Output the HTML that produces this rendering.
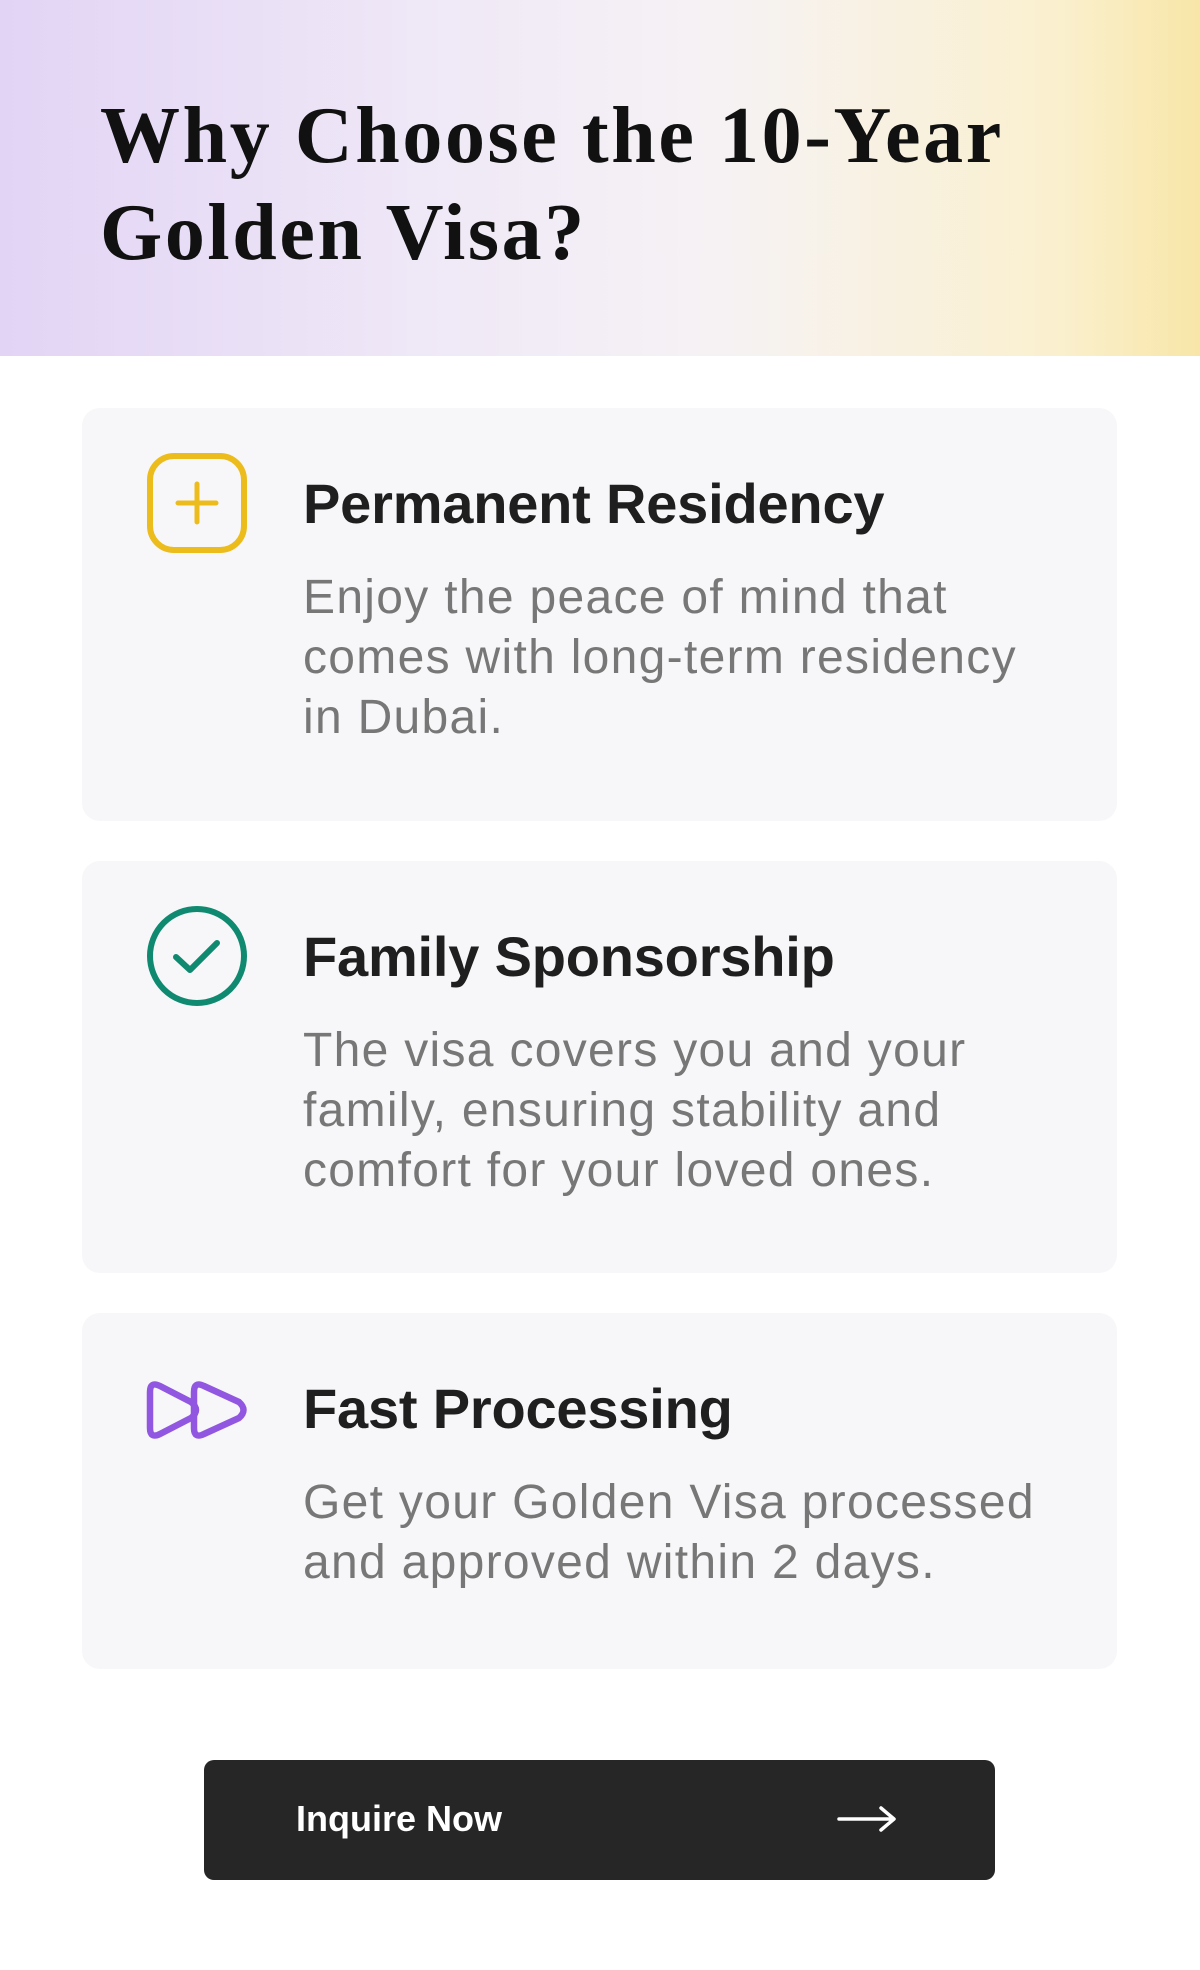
<!DOCTYPE html>
<html><head><meta charset="utf-8"><style>
*{margin:0;padding:0;box-sizing:border-box}
body{width:1200px;height:1970px;background:#fff;font-family:"Liberation Sans",sans-serif;position:relative;overflow:hidden}
.hdr{position:absolute;left:0;top:0;width:1200px;height:356px;background:linear-gradient(90deg,#e2d4f5 0%,#efe8f7 35%,#f6f2f4 60%,#faf0cf 88%,#f8e6a8 100%)}
.hdr h1{position:absolute;left:100px;top:88px;font-family:"Liberation Serif",serif;font-weight:bold;font-size:80px;line-height:97px;color:#111;letter-spacing:2.6px}
.card{position:absolute;left:82px;width:1035px;background:#f7f7f9;border-radius:18px}
.ic{position:absolute;left:64px;top:44px;width:102px;height:102px}
.t{position:absolute;left:221px;top:66px;font-size:56px;line-height:60px;font-weight:bold;color:#1f1f1f;letter-spacing:-0.2px;white-space:nowrap}
.d{position:absolute;left:221px;top:160px;width:800px;font-size:48px;line-height:60px;color:#777;letter-spacing:1.3px;white-space:nowrap}
.btn{position:absolute;left:204px;top:1760px;width:791px;height:120px;background:#262626;border-radius:10px;color:#fff}
.btn span{position:absolute;left:92px;top:39px;font-size:36px;font-weight:bold;line-height:40px}
</style></head><body>
<div class="hdr"><h1>Why Choose the 10-Year<br>Golden Visa?</h1></div>

<div class="card" style="top:408px;height:413px">
<svg class="ic" viewBox="0 0 102 102"><rect x="4" y="4" width="94" height="94" rx="24" fill="none" stroke="#ecbc1c" stroke-width="6"/><path d="M51 32V70M32 51H70" stroke="#ecbc1c" stroke-width="5" stroke-linecap="round"/></svg>
<div class="t">Permanent Residency</div>
<div class="d">Enjoy the peace of mind that<br>comes with long-term residency<br>in Dubai.</div>
</div>

<div class="card" style="top:861px;height:412px">
<svg class="ic" viewBox="0 0 102 102"><circle cx="51" cy="51" r="47" fill="none" stroke="#0f8a70" stroke-width="6"/><path d="M30 52L44 65L71 38" fill="none" stroke="#0f8a70" stroke-width="6" stroke-linecap="round" stroke-linejoin="round"/></svg>
<div class="t">Family Sponsorship</div>
<div class="d">The visa covers you and your<br>family, ensuring stability and<br>comfort for your loved ones.</div>
</div>

<div class="card" style="top:1313px;height:356px">
<svg class="ic" viewBox="0 0 102 102" style="top:46px"><path d="M4 33Q4 22 14 27L45 43Q55 51 45 59L14 75Q4 80 4 69Z" fill="none" stroke="#9257e0" stroke-width="6.5" stroke-linejoin="round"/><path d="M48 33Q48 22 58 27L93 43Q102 51 93 59L58 75Q48 80 48 69Z" fill="none" stroke="#9257e0" stroke-width="6.5" stroke-linejoin="round"/></svg>
<div class="t">Fast Processing</div>
<div class="d">Get your Golden Visa processed<br>and approved within 2 days.</div>
</div>

<div class="btn"><span>Inquire Now</span>
<svg style="position:absolute;left:633px;top:44px" width="60" height="30" viewBox="0 0 60 30"><path d="M2 15H56M44 4L57 15L44 26" fill="none" stroke="#fff" stroke-width="3.5" stroke-linecap="round" stroke-linejoin="round"/></svg>
</div>
</body></html>
